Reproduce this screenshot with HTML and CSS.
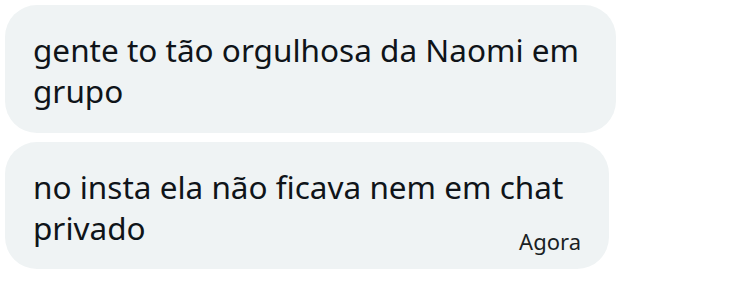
FILE: index.html
```html
<!DOCTYPE html>
<html>
<head>
  <link rel="stylesheet" href="styles.css">
</head>
<body>
  <div class="thread">
    <div class="bubble bubble-first">
      <div class="bubble-text">
        <span class="line">gente to tão orgulhosa da Naomi em</span>
        <span class="line">grupo</span>
      </div>
    </div>
    <div class="bubble bubble-last">
      <div class="bubble-text">
        <span class="line">no insta ela não ficava nem em chat</span>
        <span class="line">privado</span>
      </div>
      <div class="bubble-meta"><span class="bubble-time">Agora</span></div>
    </div>
  </div>
</body>
</html>
```

FILE: styles.css
```css
body {
  margin: 0;
  background: #FFFFFF;
  font-family: "Noto Sans", sans-serif;
  color: #0F1419;
}

.thread {
  display: flex;
  flex-direction: column;
  align-items: flex-start;
  gap: 9px;
  padding: 5px;
}

.bubble {
  box-sizing: border-box;
  background: #EFF3F4;
  border-radius: 32px;
  padding: 24px 28px;
}

.bubble-first {
  width: 611px;
  height: 128px;
}

.bubble-last {
  width: 604px;
  height: 127px;
}

.bubble-text {
  display: flex;
  flex-direction: column;
  align-items: flex-start;
  font-size: 31.5px;
  line-height: 41px;
}

.line {
  white-space: nowrap;
}

.bubble-meta {
  display: flex;
  justify-content: flex-end;
  margin-top: -20px;
}

.bubble-time {
  font-size: 22px;
  line-height: 26px;
  color: #1A1F24;
}
```
